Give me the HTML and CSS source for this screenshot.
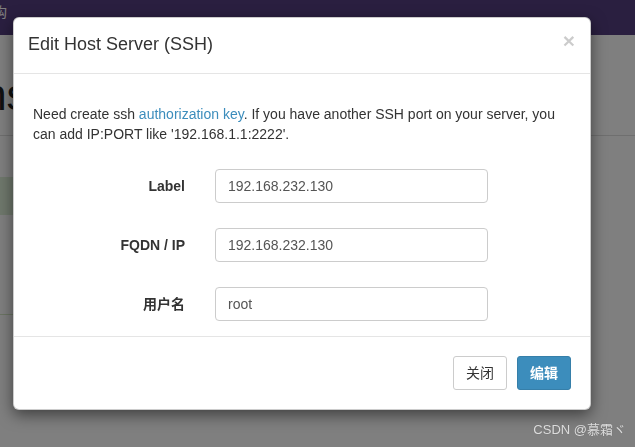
FILE: index.html
```html
<!DOCTYPE html>
<html lang="zh-CN">
<head>
  <meta charset="UTF-8">
  <meta name="viewport" content="width=device-width, initial-scale=1.0">
  <title>Edit Host Server (SSH)</title>
  <link rel="stylesheet" href="styles.css">
</head>
<body>
  <!-- 背景页面 -->
  <div class="page">
    <nav class="navbar"><span class="nav-item">架构</span></nav>
    <div class="content-header">
      <h1 class="page-title">Connections</h1>
    </div>
    <div class="content">
      <div class="callout"></div>
      <div class="box-line"></div>
    </div>
  </div>
  <div class="backdrop"></div>

  <!-- 编辑主机弹窗 -->
  <div class="modal">
    <div class="modal-header">
      <h4 class="modal-title">Edit Host Server (SSH)</h4>
      <span class="close">&times;</span>
    </div>
    <div class="modal-body">
      <p>Need create ssh <a href="#">authorization key</a>. If you have another SSH port on your server, you can add IP:PORT like '192.168.1.1:2222'.</p>
      <div class="form-row">
        <label>Label</label>
        <input type="text" value="192.168.232.130">
      </div>
      <div class="form-row">
        <label>FQDN / IP</label>
        <input type="text" value="192.168.232.130">
      </div>
      <div class="form-row">
        <label>用户名</label>
        <input type="text" value="root">
      </div>
      <div class="form-row">
        <label>密码</label>
        <input type="password" value="">
      </div>
    </div>
    <div class="modal-footer">
      <button class="btn btn-default">关闭</button>
      <button class="btn btn-primary">编辑</button>
    </div>
  </div>

  <div class="watermark">CSDN @慕霜ヾ</div>
</body>
</html>
```

FILE: styles.css
```css
/* 기본 */
body {
  margin: 0;
  padding: 0;
  background: #fff;
  font-family: "Liberation Sans", Arial, "Noto Sans CJK SC", sans-serif;
  font-size: 14px;
  color: #333;
  overflow: hidden;
}
/* 背景页面 */
.navbar {
  height: 35px;
  background: #543f80;
  overflow: hidden;
}
.nav-item {
  display: inline-block;
  margin-left: -21px;
  margin-top: 1px;
  font-size: 14px;
  color: #fff;
}
.content-header {
  padding: 38px 0 18px;
  border-bottom: 1px solid #dedede;
  overflow: hidden;
}
.page-title {
  margin: 0 0 0 -216px;
  font-size: 44px;
  line-height: 44px;
  font-weight: normal;
  color: #222;
  white-space: nowrap;
}
.content {
  padding-top: 41px;
}
.callout {
  width: 200px;
  height: 38px;
  background: #dff0d8;
}
.box-line {
  width: 300px;
  margin-top: 99px;
  border-top: 1px solid #d6e9c6;
}
.backdrop {
  position: fixed;
  top: 0;
  left: 0;
  right: 0;
  bottom: 0;
  background: rgba(0, 0, 0, 0.5);
}
/* 弹窗 */
.modal {
  position: absolute;
  top: 17px;
  left: 13px;
  width: 578px;
  box-sizing: border-box;
  background: #fff;
  border: 1px solid rgba(0, 0, 0, 0.2);
  border-radius: 6px;
  box-shadow: 0 5px 15px rgba(0, 0, 0, 0.5);
  line-height: 1.42857;
}
.modal-header {
  display: flex;
  justify-content: space-between;
  align-items: flex-start;
  padding: 14px 15px 15px 14px;
  border-bottom: 1px solid #e5e5e5;
}
.modal-title {
  margin: 0;
  font-size: 18px;
  font-weight: normal;
  color: #333;
}
.close {
  margin-top: -2px;
  font-size: 21px;
  font-weight: bold;
  line-height: 1;
  color: #000;
  opacity: 0.2;
  cursor: pointer;
}
.modal-body {
  height: 262px;
  box-sizing: border-box;
  padding: 30px 20px 0 19px;
  overflow: hidden;
}
.modal-body p {
  margin: 0 0 25px;
  line-height: 20px;
}
.modal-body a {
  color: #3c8dbc;
  text-decoration: none;
}
.form-row {
  display: grid;
  grid-template-columns: 152px 273px;
  column-gap: 30px;
  align-items: center;
  margin-bottom: 25px;
}
.form-row label {
  text-align: right;
  font-weight: bold;
  line-height: 20px;
}
.form-row input {
  height: 34px;
  box-sizing: border-box;
  padding: 6px 12px;
  border: 1px solid #ccc;
  border-radius: 4px;
  font-family: inherit;
  font-size: 14px;
  color: #555;
}
.modal-footer {
  display: flex;
  justify-content: flex-end;
  gap: 10px;
  padding: 19px 19px 19px 20px;
  border-top: 1px solid #e5e5e5;
}
.btn {
  padding: 6px 12px;
  font-family: inherit;
  font-size: 14px;
  line-height: 20px;
  border: 1px solid transparent;
  border-radius: 3px;
  cursor: pointer;
}
.btn-default {
  background: #fff;
  border-color: #ccc;
  color: #333;
}
.btn-primary {
  background: #3c8dbc;
  border-color: #367fa9;
  color: #fff;
  font-weight: bold;
}
.watermark {
  position: absolute;
  right: 9px;
  bottom: 9px;
  font-size: 13px;
  color: rgba(255, 255, 255, 0.78);
  text-shadow: 0 0 1px rgba(0, 0, 0, 0.3);
}
```
